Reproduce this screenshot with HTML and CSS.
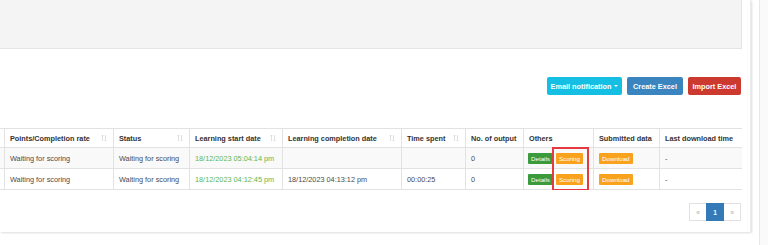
FILE: index.html
```html
<!DOCTYPE html>
<html>
<head>
<meta charset="utf-8">
<link rel="stylesheet" href="styles.css">
</head>
<body>
<div class="page">
  <div class="main">
    <div class="card">
      <div class="filter-panel"></div>
      <div class="toolbar">
        <button class="btn btn-info">Email notification <span class="caret"></span></button>
        <button class="btn btn-primary">Create Excel</button>
        <button class="btn btn-danger">Import Excel</button>
      </div>
      <div class="table-wrap">
        <table class="grid">
          <colgroup>
            <col class="c0"><col class="c1"><col class="c2"><col class="c3"><col class="c4"><col class="c5"><col class="c6"><col class="c7"><col class="c8"><col class="c9">
          </colgroup>
          <thead>
            <tr>
              <th></th>
              <th><div class="th-in">Points/Completion rate<svg class="sort" viewBox="0 0 6 8"><path d="M1.5 7V1M0.5 2L1.5 1L2.5 2M4.5 1V7M3.5 6L4.5 7L5.5 6"/></svg></div></th>
              <th><div class="th-in">Status<svg class="sort" viewBox="0 0 6 8"><path d="M1.5 7V1M0.5 2L1.5 1L2.5 2M4.5 1V7M3.5 6L4.5 7L5.5 6"/></svg></div></th>
              <th><div class="th-in">Learning start date<svg class="sort" viewBox="0 0 6 8"><path d="M1.5 7V1M0.5 2L1.5 1L2.5 2M4.5 1V7M3.5 6L4.5 7L5.5 6"/></svg></div></th>
              <th><div class="th-in">Learning completion date<svg class="sort" viewBox="0 0 6 8"><path d="M1.5 7V1M0.5 2L1.5 1L2.5 2M4.5 1V7M3.5 6L4.5 7L5.5 6"/></svg></div></th>
              <th><div class="th-in">Time spent<svg class="sort" viewBox="0 0 6 8"><path d="M1.5 7V1M0.5 2L1.5 1L2.5 2M4.5 1V7M3.5 6L4.5 7L5.5 6"/></svg></div></th>
              <th>No. of output</th>
              <th>Others</th>
              <th>Submitted data</th>
              <th>Last download time</th>
            </tr>
          </thead>
          <tbody>
            <tr class="odd">
              <td></td>
              <td>Waiting for scoring</td>
              <td>Waiting for scoring</td>
              <td class="green">18/12/2023 05:04:14 pm</td>
              <td></td>
              <td></td>
              <td>0</td>
              <td class="others"><span class="tag tag-green">Details</span><span class="tag tag-orange">Scoring</span><span class="highlight"></span></td>
              <td><span class="tag tag-orange">Download</span></td>
              <td>-</td>
            </tr>
            <tr>
              <td></td>
              <td>Waiting for scoring</td>
              <td>Waiting for scoring</td>
              <td class="green">18/12/2023 04:12:45 pm</td>
              <td>18/12/2023 04:13:12 pm</td>
              <td>00:00:25</td>
              <td>0</td>
              <td class="others"><span class="tag tag-green">Details</span><span class="tag tag-orange">Scoring</span></td>
              <td><span class="tag tag-orange">Download</span></td>
              <td>-</td>
            </tr>
          </tbody>
        </table>
      </div>
      <div class="pager">
        <span class="pg pg-arrow">«</span>
        <span class="pg pg-active">1</span>
        <span class="pg pg-arrow">»</span>
      </div>
    </div>
  </div>
  <div class="side"></div>
</div>
</body>
</html>
```
FILE: styles.css
```css
* { box-sizing: border-box; }
html, body { margin: 0; padding: 0; }
body {
  font-family: "Liberation Sans", Arial, sans-serif;
  font-size: 7.3px;
  color: #333;
  background: #fafafa;
  overflow: hidden;
}
.page {
  display: flex;
  width: 768px;
  height: 245px;
}
.main {
  width: 760px;
  height: 245px;
  background: #fff;
  border-right: 1px solid #e8e8e8;
}
.card {
  width: 751px;
  height: 232px;
  padding-right: 9px;
  background: #fff;
  box-shadow: 1px 1px 2px rgba(0,0,0,0.14);
  border-right: 1px solid #ececec;
}
.filter-panel {
  width: 742px;
  height: 49px;
  background: #f4f4f4;
  border-right: 1px solid #e4e4e4;
  border-bottom: 1px solid #e4e4e4;
}
.toolbar {
  display: flex;
  justify-content: flex-end;
  gap: 5px;
  margin-top: 28px;
  height: 18px;
}
.btn {
  border: none;
  border-radius: 2px;
  height: 18px;
  padding: 0;
  color: #fff;
  font-family: "Liberation Sans", Arial, sans-serif;
  font-weight: bold;
  font-size: 7.3px;
  display: flex;
  align-items: center;
  justify-content: center;
}
.btn-info { background: #14bfe3; width: 75px; }
.btn-primary { background: #3a85c0; width: 56px; }
.btn-danger { background: #cc3a2f; width: 53px; }
.caret {
  display: inline-block;
  width: 0; height: 0;
  margin-left: 3px;
  border-left: 2px solid transparent;
  border-right: 2px solid transparent;
  border-top: 2px solid #fff;
}
.table-wrap {
  width: 742px;
  overflow: hidden;
  margin-top: 33px;
}
.grid {
  margin-left: -30px;
  width: 772px;
  table-layout: fixed;
  border-collapse: collapse;
}
.c0 { width: 34px; }
.c1 { width: 109px; }
.c2 { width: 76px; }
.c3 { width: 93px; }
.c4 { width: 119px; }
.c5 { width: 64px; }
.c6 { width: 58px; }
.c7 { width: 70px; }
.c8 { width: 66px; }
.c9 { width: 83px; }
.grid th, .grid td {
  border: 1px solid #e2e2e2;
  padding: 0 5px;
  text-align: left;
  white-space: nowrap;
  overflow: visible;
}
.grid th {
  height: 19px;
  font-weight: bold;
  color: #333;
}
.grid td {
  height: 21px;
  color: #4a4a4a;
}
.grid tr.odd td { background: #f9f9f9; }
.th-in {
  display: flex;
  justify-content: space-between;
  align-items: center;
}
.sort {
  width: 6px;
  height: 8px;
  margin-right: 1px;
  fill: none;
  stroke: #d8d8d8;
  stroke-width: 0.8;
}
.green { color: #58b858 !important; }
.others { position: relative; padding-left: 4px !important; }
.tag {
  display: inline-block;
  height: 11px;
  line-height: 11px;
  padding: 0 3px;
  border-radius: 1px;
  font-size: 6.2px;
  color: #fff;
  vertical-align: middle;
}
.tag + .tag { margin-left: 3px; }
.tag-green { background: #3a9a3c; }
.tag-orange { background: #f8a21d; }
.highlight {
  position: absolute;
  left: 28px;
  top: -1px;
  width: 37px;
  height: 44px;
  border: 2px solid #e43a40;
  z-index: 2;
}
.pager {
  display: flex;
  justify-content: flex-end;
  margin-top: 13px;
}
.pg {
  display: flex;
  align-items: center;
  justify-content: center;
  width: 18px;
  height: 18px;
  border: 1px solid #e2e2e2;
  margin-left: -1px;
  font-size: 6.5px;
  color: #aaa;
  background: #fff;
}
.pg-active {
  background: #337ab7;
  border-color: #337ab7;
  color: #fff;
  font-weight: bold;
  position: relative;
  z-index: 1;
}
.side {
  flex: 1;
  background: #fafafa;
}
```
